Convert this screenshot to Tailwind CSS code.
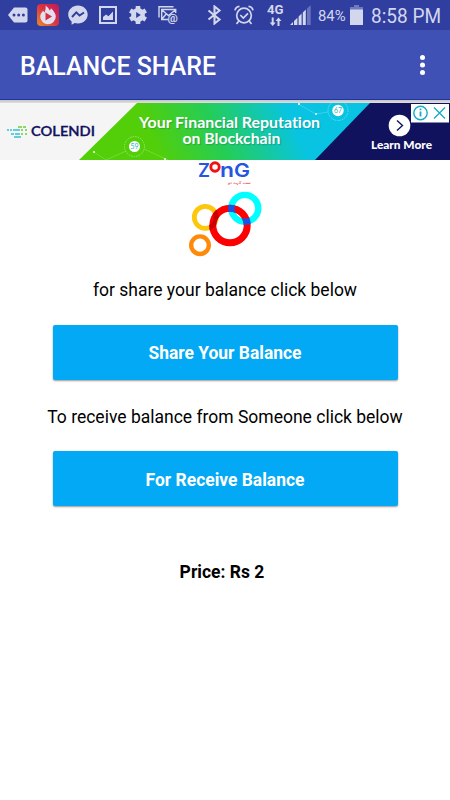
<!DOCTYPE html>
<html lang="en">
<head>
  <meta charset="UTF-8">
  <meta name="viewport" content="width=device-width, initial-scale=1.0">
  <title>Balance Share</title>
  <script src="https://cdn.jsdelivr.net/npm/@tailwindcss/browser@4"></script>
</head>
<body class="min-h-screen bg-white font-[Roboto,sans-serif] text-black">
  <!-- Status bar -->
  <div class="flex h-[30px] items-center bg-[#303f9f] pl-2 text-[#d3d7ee]">
    <svg class="mr-[9px] h-5 w-5 shrink-0" viewBox="0 0 20 20" fill="currentColor">
      <path d="M6 2.500h11.500q2 0 2 2v11q0 2-2 2H6L0 10z"/>
      <g fill="#303f9f"><circle cx="6" cy="10" r="1.500"/><circle cx="10.700" cy="10" r="1.500"/><circle cx="15.400" cy="10" r="1.500"/></g>
    </svg>
    <svg class="mr-[9px] h-[22px] w-[22px] shrink-0" viewBox="0 0 22 22">
      <defs><linearGradient id="hot" x1="0" y1="1" x2="1" y2="0"><stop offset="0" stop-color="#ee8d27"/><stop offset=".5" stop-color="#da3440"/><stop offset="1" stop-color="#c5185c"/></linearGradient></defs>
      <rect width="22" height="22" rx="4" fill="url(#hot)"/>
      <path d="M8.500 1.500c2 1.500 3.500 3 4 5 .8-.5 1.300-1.300 1.500-2.300 2.800 2.800 4.800 5.600 4.800 8.300a7.800 7.800 0 0 1-15.600 0c0-2.600 1.700-4.300 3.100-6 .2 1 .6 1.600 1.200 2 .9-2 1.500-4.200 1-7z" fill="#e1dff0"/>
      <path d="M8.500 8.500l6.500 4-6.500 4z" fill="#d62e43"/>
    </svg>
    <svg class="mr-[11px] h-5 w-5 shrink-0" viewBox="0 0 20 20">
      <path d="M10 .5C4.500.500.200 4.500.200 9.600c0 2.800 1.300 5.200 3.400 6.800v3.400l3.200-1.700c1 .3 2 .4 3.200.4 5.500 0 9.700-4 9.700-8.900S15.500.500 10 .500z" fill="currentColor"/>
      <path d="M4 12l4.300-4.600 3.200 3.100L16 7.500" fill="none" stroke="#303f9f" stroke-width="2"/>
    </svg>
    <svg class="mr-[12px] h-[18px] w-[18px] shrink-0" viewBox="0 0 18 18" fill="none" stroke="currentColor" stroke-width="2">
      <path d="M1 1h16v16H1z"/>
      <path d="M4 14v-3l3-2.500 2.500 1.700L14 5.500V14z" fill="currentColor" stroke="none"/>
    </svg>
    <svg class="mr-[11px] h-[18px] w-[18px] shrink-0" viewBox="0 0 18 18" fill="currentColor">
      <circle cx="9" cy="9" r="6.900"/>
      <g stroke="currentColor" stroke-width="4.600"><path d="M9 0v18M1.200 4.500l15.600 9M16.800 4.500l-15.600 9"/></g>
      <path d="M7.200 6l4.600 3-4.600 3z" fill="#303f9f"/>
    </svg>
    <svg class="mr-[27px] h-5 w-[22px] shrink-0" viewBox="0 0 22 20" fill="none" stroke="currentColor" stroke-width="1.400">
      <path d="M1 12.500V1.700h14.500"/>
      <path d="M10 14.500H3.700V4.500h14V8M4 5l6.500 5.500L17.300 5M4 14l4.200-5"/>
      <text x="9.500" y="17" font-family="Roboto, sans-serif" font-size="11.500" font-weight="700" fill="currentColor" stroke="none">@</text>
    </svg>
    <svg class="mr-[12px] h-5 w-[15px] shrink-0" viewBox="0 0 15 20" fill="none" stroke="currentColor" stroke-width="2.100">
      <path d="M1.500 5.500l11 9L7.500 18.500v-17l5 4-11 9"/>
    </svg>
    <svg class="mr-[13px] h-5 w-5 shrink-0" viewBox="0 0 20 20" fill="none" stroke="currentColor" stroke-width="1.700">
      <circle cx="10" cy="10.500" r="7.300"/>
      <path d="M6.300 10l3 3 4.700-4.700M1 5.300Q1.500 1.800 5.500 1.300M19 5.300Q18.500 1.800 14.500 1.300M4.800 16L2.500 19M15.200 16l2.300 3"/>
    </svg>
    <svg class="mr-[6px] h-[24px] w-[17px] shrink-0" viewBox="0 0 17 24" fill="currentColor">
      <text x="0" y="11" font-family="Roboto, sans-serif" font-size="13" font-weight="700" textLength="16.500" lengthAdjust="spacingAndGlyphs">4G</text>
      <path d="M4.700 14.500h2v5h2l-3 3.500-3-3.500h2zM10.500 23h2v-5h2l-3-3.500-3 3.500h2z"/>
    </svg>
    <svg class="mr-[7px] h-5 w-[21px] shrink-0" viewBox="0 0 21 20" fill="currentColor">
      <path d="M0 20h3v-3zM4 20h3.400v-7.200L4 16zM8.600 20h3v-11.500l-3 3zM12.800 20h3V4.600l-3 3z"/>
      <path d="M17 20h3.700V.2L17 3.500z" opacity=".35"/>
    </svg>
    <svg class="mr-[4px] h-5 w-7 shrink-0" viewBox="0 0 28 20" fill="currentColor">
      <text x="0" y="15.500" font-family="Roboto, sans-serif" font-size="14.500" textLength="27.500" lengthAdjust="spacingAndGlyphs">84%</text>
    </svg>
    <svg class="mr-[8px] h-5 w-[13px] shrink-0" viewBox="0 0 13 20" fill="currentColor">
      <path d="M4 0h5v2h4v3H0V2h4z" opacity=".4"/>
      <path d="M0 4.500h13V20H0z"/>
    </svg>
    <svg class="h-6 w-[71px] shrink-0" viewBox="0 0 71 24" fill="currentColor">
      <text x="0" y="19.500" font-family="Roboto, sans-serif" font-size="19.500" textLength="70" lengthAdjust="spacingAndGlyphs">8:58 PM</text>
    </svg>
  </div>

  <!-- App bar -->
  <div class="flex h-[70px] items-center justify-between border-b border-[#1c35a0] bg-[#3f51b5] pr-[25px] pl-5 text-white">
    <svg class="h-8 w-[200px]" viewBox="0 0 200 32" fill="currentColor">
      <text x="0" y="26" font-family="Roboto, sans-serif" font-size="25.300" font-weight="500" textLength="196" lengthAdjust="spacingAndGlyphs">BALANCE SHARE</text>
    </svg>
    <svg class="h-6 w-[5px]" viewBox="0 0 5 24" fill="currentColor">
      <circle cx="2.500" cy="4.500" r="2.500"/><circle cx="2.500" cy="12" r="2.500"/><circle cx="2.500" cy="19.500" r="2.500"/>
    </svg>
  </div>
  <div class="h-[3px] bg-gradient-to-b from-[#c5c5c3] to-[#dfdfdd]"></div>

  <!-- Ad banner -->
  <svg class="block h-[57px] w-full" viewBox="0 0 450 57" font-family="Lato, sans-serif">
    <defs>
      <linearGradient id="ad" gradientUnits="userSpaceOnUse" x1="160" y1="55" x2="285" y2="0">
        <stop offset="0" stop-color="#52cf08"/><stop offset=".45" stop-color="#25cd55"/><stop offset="1" stop-color="#08c4e2"/>
      </linearGradient>
    </defs>
    <path d="M0 0h450v57H0z" fill="#f5f5f5"/>
    <path d="M137 0h240v57H79z" fill="url(#ad)"/>
    <path d="M370 0h80v57H315z" fill="#11125e"/>
    <!-- Colendi mark -->
    <g stroke-width="1.500">
      <path d="M7 27h2M10 27h2M13 27h7M11 31h3M15 31h5M14 34h7" stroke="#33c1d2"/>
      <path d="M18 24h4M23 24h3M21 27h2M25 27h2M21 31h2M25 31h2" stroke="#6dce38"/>
    </g>
    <text x="31" y="32.500" font-size="13" font-weight="600" fill="#11125e" stroke="#11125e" stroke-width=".3" textLength="64" lengthAdjust="spacingAndGlyphs">COLENDI</text>
    <!-- Network decoration -->
    <g fill="none" stroke="#fff" opacity=".4">
      <circle cx="134.500" cy="43.500" r="10" stroke-dasharray="1.500 1"/>
      <circle cx="338" cy="7.500" r="10" stroke-dasharray="1.500 1"/>
      <path d="M94 49l12 8 20-9M144 46l24 11M298 1l18 10 12-2" stroke-width=".5"/>
    </g>
    <g fill="#fff">
      <circle cx="134.500" cy="43.500" r="5.500"/><circle cx="338" cy="7.500" r="5.700"/>
      <circle cx="94" cy="49" r="1"/><circle cx="165" cy="56" r="1"/><circle cx="299" cy="1" r="1"/><circle cx="316" cy="11" r="1"/>
    </g>
    <g font-size="7" fill="#2eb7bd" text-anchor="middle">
      <text x="134.500" y="46">59</text><text x="338" y="10">67</text>
    </g>
    <g class="[font-variant-ligatures:none] [text-shadow:1px_1px_1px_rgba(20,80,70,0.3)]" font-size="14.500" font-weight="700" fill="#fff">
      <text x="139" y="25" textLength="181" lengthAdjust="spacingAndGlyphs">Your Financial Reputation</text>
      <text x="182.500" y="41" textLength="98" lengthAdjust="spacingAndGlyphs">on Blockchain</text>
    </g>
    <circle cx="399.500" cy="22.500" r="10.800" fill="#fff"/>
    <path d="M397 17.500l5.500 5-5.500 5" fill="none" stroke="#11125e" stroke-width="1.400"/>
    <text x="371" y="45.500" font-size="11.300" font-weight="900" fill="#fff" textLength="61" lengthAdjust="spacingAndGlyphs">Learn More</text>
    <path d="M411 1h38v18.500h-38z" fill="#fff"/>
    <g fill="none" stroke="#19aac8" stroke-width="1.400">
      <circle cx="420.500" cy="10" r="6.700"/>
      <path d="M420.500 8.500v5M420.500 5.500v1.700" stroke-width="1.800"/>
      <path d="M434 4.500l11 11M445 4.500l-11 11"/>
    </g>
  </svg>

  <!-- Zong logo -->
  <main class="flex flex-col items-center">
    <svg class="h-[100px] w-[90px]" viewBox="180 160 90 100">
      <g font-family="Inter, sans-serif" font-weight="600" fill="#2456df">
        <text x="198" y="177" font-size="18.500" textLength="12" lengthAdjust="spacingAndGlyphs">Z</text>
        <text x="220" y="177" font-size="20" textLength="14" lengthAdjust="spacingAndGlyphs">n</text>
        <text x="234" y="177" font-size="18.500" textLength="16" lengthAdjust="spacingAndGlyphs">G</text>
      </g>
      <circle cx="215" cy="167" r="4.200" fill="none" stroke="#ee1212" stroke-width="2.900"/>
      <text x="228" y="183.500" direction="rtl" text-anchor="end" font-family="DejaVu Sans, sans-serif" font-size="4.300" fill="#e5232b">سب کہہ دو</text>
      <mask id="red-ring"><circle cx="230" cy="225.500" r="17.200" fill="none" stroke="#fff" stroke-width="7"/></mask>
      <g fill="none">
        <circle cx="205.300" cy="217.300" r="11" stroke="#fcc70c" stroke-width="4.800"/>
        <circle cx="200" cy="245.200" r="8.800" stroke="#ff8a0a" stroke-width="4.400"/>
        <circle cx="244.800" cy="208.300" r="13.500" stroke="#00ffff" stroke-width="6.300"/>
        <circle cx="230" cy="225.500" r="17.200" stroke="#fd0000" stroke-width="7"/>
        <g mask="url(#red-ring)">
          <circle cx="244.800" cy="208.300" r="13.500" stroke="#1655ec" stroke-width="6.300"/>
          <circle cx="205.300" cy="217.300" r="11" stroke="#c80000" stroke-width="4.800"/>
        </g>
      </g>
    </svg>

    <p class="mt-[18px] text-[17.500px] leading-6">for share your balance click below</p>
    <button class="mt-[23px] h-[55px] w-[345px] rounded-[2px] bg-[#03a9f4] pt-[2px] text-[17.450px] font-bold text-white shadow-[0_1px_2px_rgba(0,0,0,0.4)]">Share Your Balance</button>
    <p class="mt-[25px] text-[17.500px] leading-6">To receive balance from Someone click below</p>
    <button class="mt-[22px] h-[55px] w-[345px] rounded-[2px] bg-[#03a9f4] pt-[3px] text-[17.450px] font-bold text-white shadow-[0_1px_2px_rgba(0,0,0,0.4)]">For Receive Balance</button>
    <p class="mt-[54px] mr-[6px] text-[17.500px] leading-6 font-bold">Price: Rs 2</p>
  </main>
</body>
</html>
